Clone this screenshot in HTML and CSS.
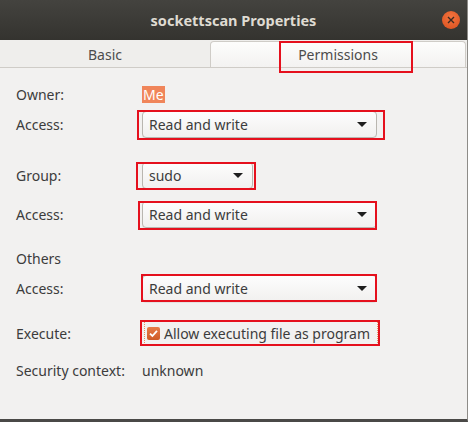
FILE: index.html
```html
<!DOCTYPE html>
<html lang="en">
<head>
  <meta charset="UTF-8" />
  <meta name="viewport" content="width=device-width, initial-scale=1.0" />
  <title>sockettscan Properties</title>
  <link rel="stylesheet" href="styles.css">
</head>
<body>
  <div class="window">
    <!-- title bar -->
    <div class="titlebar">
      <span class="title">sockettscan Properties</span>
      <span class="close">
        <svg width="8" height="8" viewBox="0 0 8 8"><path d="M1 1L7 7M7 1L1 7" stroke="#3a2a22" stroke-width="1.4"/></svg>
      </span>
    </div>

    <!-- notebook tabs -->
    <div class="tabs">
      <div class="tab">Basic</div>
      <div class="tab active">Permissions<span class="mark-tab"></span></div>
    </div>

    <div class="content">
      <div class="row row-owner">
        <span class="label">Owner:</span>
        <span class="owner">Me</span>
      </div>
      <div class="row row-combo">
        <span class="label">Access:</span>
        <div class="combo wide mark m1">
          <span>Read and write</span>
          <span class="arrow"></span>
        </div>
      </div>

      <div class="row row-combo row-group">
        <span class="label">Group:</span>
        <div class="combo narrow mark m2">
          <span>sudo</span>
          <span class="arrow"></span>
        </div>
      </div>
      <div class="row row-combo row-access2">
        <span class="label">Access:</span>
        <div class="combo wide mark m3">
          <span>Read and write</span>
          <span class="arrow"></span>
        </div>
      </div>

      <div class="row row-others">
        <span class="label">Others</span>
      </div>
      <div class="row row-combo row-access3">
        <span class="label">Access:</span>
        <div class="combo wide mark m4">
          <span>Read and write</span>
          <span class="arrow"></span>
        </div>
      </div>

      <div class="row row-exec">
        <span class="label">Execute:</span>
        <label class="check mark m5">
          <span class="box">
            <svg width="13" height="13" viewBox="0 0 13 13"><path d="M3 6.6L5.4 9L10 3.8" fill="none" stroke="#fff" stroke-width="1.8"/></svg>
          </span>
          Allow executing file as program
        </label>
      </div>

      <div class="row row-sec">
        <span class="label">Security context:</span>
        <span>unknown</span>
      </div>
    </div>
  </div>
</body>
</html>
```

FILE: styles.css
```css
/* Reset & window frame */
html, body {
  margin: 0;
  padding: 0;
  background: #f2f1f0;
}

.window {
  width: 467px;
  height: 419px;
  border-right: 1px solid #8e8c88;
  border-bottom: 3px solid #4a4947;
  background: #f2f1f0;
  font-family: "Noto Sans", "DejaVu Sans", sans-serif;
  font-size: 14px;
  color: #3c3c3c;
  overflow: hidden;
}

/* Title bar */
.titlebar {
  height: 40px;
  background: linear-gradient(#44433f, #34332f);
  display: flex;
  align-items: center;
  justify-content: center;
  position: relative;
}
.title {
  color: #dfdbd2;
  font-weight: bold;
  font-size: 14.5px;
}
.close {
  position: absolute;
  right: 7px;
  top: 11px;
  width: 18px;
  height: 18px;
  border-radius: 50%;
  background: radial-gradient(circle at 50% 35%, #f4743f, #d84f1d);
  display: flex;
  align-items: center;
  justify-content: center;
}

/* Tabs */
.tabs {
  display: flex;
  height: 26px;
  padding-top: 1px;
  border-bottom: 1px solid #cfccc7;
  background: #efeeec;
}
.tab {
  flex: 0 0 210px;
  display: flex;
  align-items: center;
  justify-content: center;
  color: #4c4c4c;
  font-size: 14px;
  position: relative;
}
.tab.active {
  flex: 1;
  background: linear-gradient(#fdfdfc, #f3f2f1);
  border: 1px solid #cfccc7;
  border-bottom: none;
  border-radius: 4px 4px 0 0;
  margin-right: 1px;
}

/* Red annotation boxes */
.mark { position: relative; }
.mark::after {
  content: '';
  position: absolute;
  border: 2px solid #e5101d;
  pointer-events: none;
}
.mark-tab {
  position: absolute;
  left: 68px;
  top: -1px;
  width: 134px;
  height: 32px;
  box-sizing: border-box;
  border: 2px solid #e5101d;
}
.m1::after { top: -2px; right: -9px; bottom: -3px; left: -6px; }
.m2::after { top: -1px; right: -4px; bottom: -2px; left: -7px; }
.m3::after { top: -1px; right: -1px; bottom: -3px; left: -5px; }
.m4::after { top: -2px; right: -1px; bottom: -1px; left: -2px; }
.m5::after { top: -2px; right: -3px; bottom: -2px; left: -5px; }

/* Form rows */
.content { padding-top: 17px; }
.row {
  display: flex;
  align-items: center;
  padding-left: 16px;
}
.label { width: 126px; flex: none; }
.row-owner { height: 18px; }
.row-combo { height: 27px; margin-top: 8px; }
.row-group { margin-top: 24px; }
.row-access2 { margin-top: 12px; }
.row-others { height: 18px; margin-top: 21px; }
.row-access3 { margin-top: 8px; }
.row-exec { height: 24px; margin-top: 19px; }
.row-sec { height: 18px; margin-top: 16px; }

.owner {
  background: #f0855a;
  color: #fff;
  padding: 0 1px;
  line-height: 17px;
}

/* Combo boxes */
.combo {
  box-sizing: border-box;
  height: 27px;
  border: 1px solid #b9b6b0;
  border-radius: 4px;
  background: linear-gradient(#fdfdfd, #f1f0ef);
  box-shadow: 0 1px 0 rgba(0, 0, 0, 0.06);
  display: flex;
  align-items: center;
  justify-content: space-between;
  padding: 0 9px 0 6px;
}
.combo.wide { width: 235px; }
.combo.narrow { width: 111px; }
.arrow {
  width: 0;
  height: 0;
  border-left: 5px solid transparent;
  border-right: 5px solid transparent;
  border-top: 5px solid #1e1e1e;
}

/* Checkbox */
.check {
  display: flex;
  align-items: center;
  gap: 4px;
  height: 24px;
  box-sizing: border-box;
  padding: 0 7px 0 2px;
  margin-left: 2px;
  border: 1px dotted #ec8c62;
}
.box {
  width: 13px;
  height: 13px;
  border-radius: 2px;
  background: linear-gradient(#e77b48, #cf5b27);
  display: flex;
}
```
